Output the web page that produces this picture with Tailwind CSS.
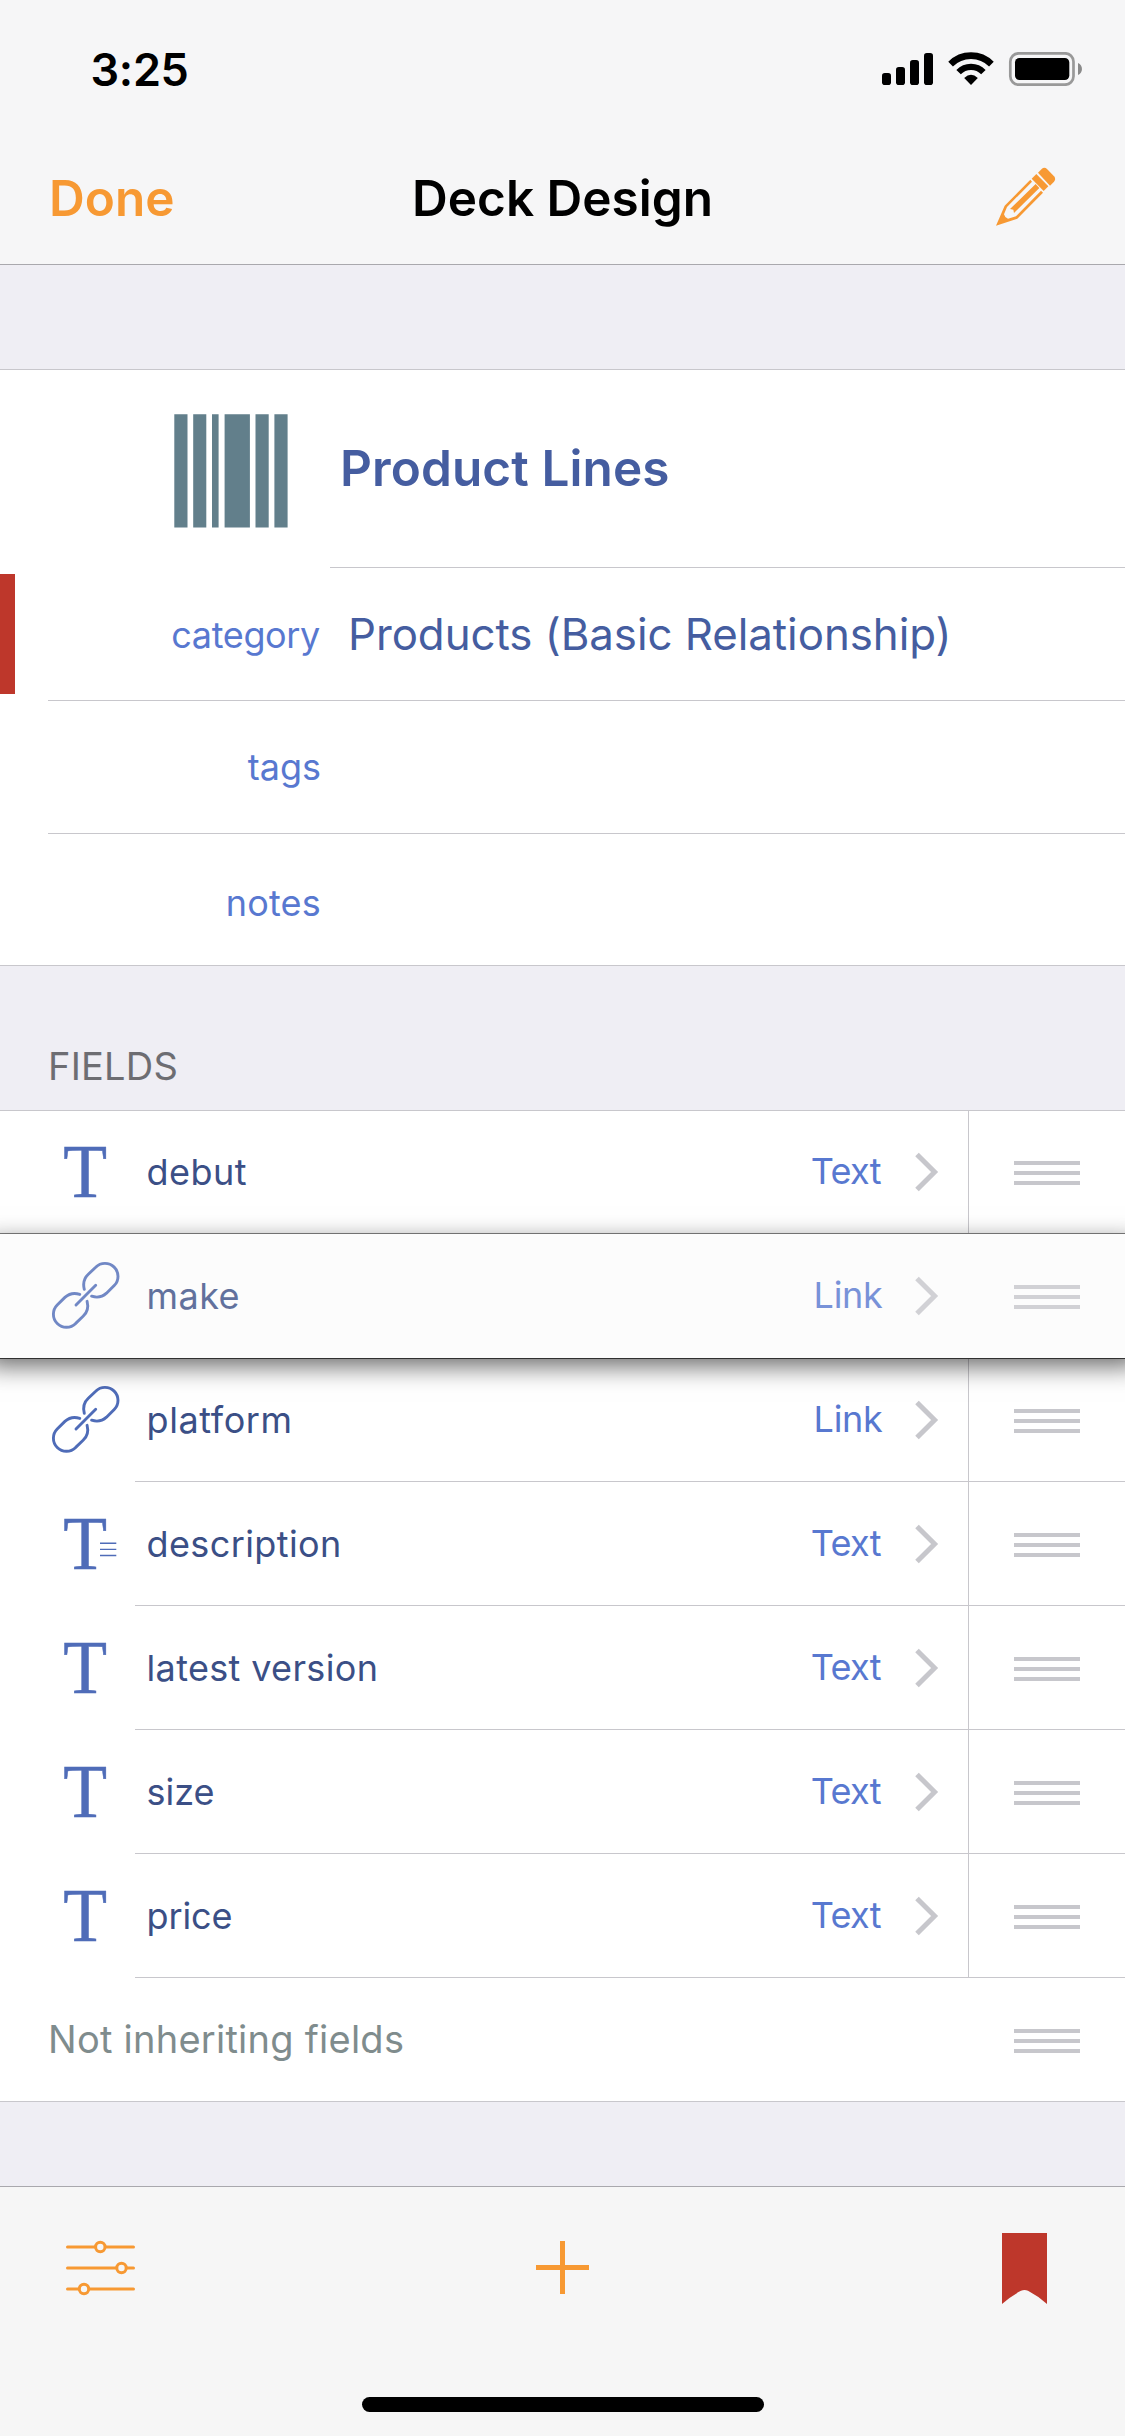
<!DOCTYPE html>
<html lang="en">
<head>
<meta charset="utf-8">
<title>Deck Design</title>
<script src="https://cdn.jsdelivr.net/npm/@tailwindcss/browser@4"></script>
</head>
<body class="w-[1125px] h-[2436px] overflow-hidden bg-[#efeef4] font-['Inter',sans-serif] text-[36px] leading-none">

<!-- shared icon shapes -->
<svg class="hidden">
  <symbol id="link" viewBox="48 0 72 124">
    <g fill="none" stroke="#4f6cb8" stroke-width="2.9" stroke-linecap="round">
      <path d="M84.3 55.3C82.8 49.5 84.3 44 88.3 40.3L95.7 33.2A13 13 0 0 1 114.2 51.6L106.5 59.2C102.5 62.8 97 64 91.6 62.2"/>
      <path d="M84.3 55.3C82.8 49.5 84.3 44 88.3 40.3L95.7 33.2A13 13 0 0 1 114.2 51.6L106.5 59.2C102.5 62.8 97 64 91.6 62.2" transform="rotate(180 85.7 61.3)"/>
      <path d="M76 71L95.7 51.3"/>
    </g>
  </symbol>
  <symbol id="chevron" viewBox="0 0 24 40"><path d="M2 2.5L19.600 20L2 37.500" fill="none" stroke="#c7c7cc" stroke-width="5"/></symbol>
  <symbol id="grip" viewBox="0 0 66 24"><path d="M0 2H66M0 12H66M0 22H66" fill="none" stroke="#c7c7cc" stroke-width="4"/></symbol>
</svg>

<header class="h-[265px] bg-[#f6f6f7] border-b border-[#a9a8ad]">
  <div class="h-[138px] flex items-center justify-between pl-[90.5px] pr-[43px]">
    <span class="text-[45px] font-semibold tracking-[-0.3px] text-black">3:25</span>
    <svg class="w-[200px] h-[34px]" viewBox="882 52 200 34">
      <rect x="882" y="73" width="9" height="12" rx="2.800"/>
      <rect x="896" y="67" width="9" height="18" rx="2.800"/>
      <rect x="910" y="60" width="9" height="25" rx="2.800"/>
      <rect x="924" y="53" width="9" height="32" rx="2.800"/>
      <path d="M950.6 64.1A28.8 28.8 0 0 1 991.4 64.1" fill="none" stroke="#000" stroke-width="6.600"/>
      <path d="M958.6 72.1A17.500 17.500 0 0 1 983.4 72.1" fill="none" stroke="#000" stroke-width="6.300"/>
      <path d="M971 85L964.2 78Q971 71.600 977.8 78Z"/>
      <rect x="1010.300" y="53.300" width="63.200" height="31.400" rx="8.500" fill="none" stroke="#999" stroke-width="2.700"/>
      <rect x="1015" y="58" width="54.300" height="22" rx="4.500"/>
      <path d="M1078 63C1083.300 65 1083.300 73 1078 75Z" fill="#8a8a8a"/>
    </svg>
  </div>
  <nav class="h-[120px] flex items-center justify-between pl-[49px] pr-[69px] text-[49.5px]">
    <span class="w-[140px] pt-[2px] font-semibold text-[#f79933]">Done</span>
    <span class="pt-[2px] ml-[-17px] mr-[43px] whitespace-nowrap font-semibold text-black">Deck Design</span>
    <svg class="w-[60px] h-[60px] overflow-visible" viewBox="408 414 180 180" fill="#f79933">
      <path d="M534 428L545 417Q553 410 561 417L582 439Q589 447 582 455L570 467Z"/>
      <path d="M515 446L529 432L565 469L551 483Z"/>
      <path d="M511 449L516 455L441 531L432 553L436 561L444 566L468 559L543 482L549 488L472 566L408 587L434 527Z"/>
      <path d="M527 462L538 474L462 549L460 539L450 537Z"/>
    </svg>
  </nav>
</header>

<section class="mt-[104px] h-[597px] bg-white border-y border-[#c8c7cc]">
  <div class="h-[198px] flex">
    <div class="w-[330px] flex items-center justify-end pr-[42px] pt-[4px]">
      <svg class="w-[114px] h-[114px]" viewBox="174 414 114 114" fill="#627f8b">
        <path d="M174.300 414.300h13.200v113.300h-13.200zM193.200 414.300h13.100v113.300h-13.100zM212 414.300h6.600v113.300h-6.600zM224.600 414.300h25.300v113.300h-25.300zM255.500 414.300h13.200v113.300h-13.200zM274.400 414.300h13.200v113.300h-13.200z"/>
      </svg>
    </div>
    <h1 class="flex-1 flex items-center border-b border-[#c8c7cc] pl-[10px] text-[49.5px] font-semibold tracking-[0.1px] text-[#455da0]">Product Lines</h1>
  </div>
  <div class="h-[133px] flex">
    <div class="w-[15px] h-[120px] mt-[6px] bg-[#be372b]"></div>
    <div class="ml-[33px] flex-1 flex items-center border-b border-[#c8c7cc]">
      <span class="w-[272px] text-right tracking-[-0.35px] text-[#5878d0] pt-px">category</span>
      <span class="pl-[28px] pt-[2px] text-[43.8px] tracking-[-0.04px] text-[#455da0]">Products (Basic Relationship)</span>
    </div>
  </div>
  <div class="h-[133px] ml-[48px] flex items-center border-b border-[#c8c7cc]">
    <span class="w-[273px] text-right text-[#5878d0]">tags</span>
  </div>
  <div class="h-[131px] ml-[48px] flex items-center pt-[7px]">
    <span class="w-[273px] text-right tracking-[0.2px] text-[#5878d0]">notes</span>
  </div>
</section>

<h2 class="h-[144px] flex items-end pb-[24px] pl-[48px] text-[38px] leading-[40px] tracking-[0.2px] text-[#6d6d72]">FIELDS</h2>

<section class="h-[992px] bg-white shadow-[inset_0_1px_0_#c8c7cc,inset_0_-1px_0_#c8c7cc]">
  <div id="fields"></div>
  <div class="h-[124px] flex items-center pl-[48px] pr-[45px]">
    <span class="flex-1 pb-[2px] text-[38px] tracking-[0.25px] text-[#7f8c8d]">Not inheriting fields</span>
    <svg class="w-[66px] h-[24px] mt-[2px]"><use href="#grip"/></svg>
  </div>
</section>

<footer class="mt-[84px] h-[250px] bg-[#f6f6f6] border-t border-[#a9a8ad]">
  <div class="h-[161px] grid grid-cols-3 items-center">
    <svg class="ml-[66px] w-[69px] h-[56px]" viewBox="0 0 69 56" fill="none" stroke="#f79933" stroke-width="3" stroke-linecap="round">
      <path d="M1.500 7H29M39.600 7H67.500M1.500 28H50M61 28H67.500M1.500 49H12.500M23.500 49H67.500"/>
      <circle cx="34.300" cy="7" r="4.700"/><circle cx="55.500" cy="28" r="4.700"/><circle cx="18" cy="49" r="4.700"/>
    </svg>
    <svg class="justify-self-center w-[53px] h-[53px]" viewBox="0 0 53 53"><path d="M26.500 0V53M0 26.500H53" stroke="#f79933" stroke-width="5"/></svg>
    <svg class="justify-self-end mr-[78px] w-[45px] h-[71px] mt-[2px]" viewBox="0 0 45 71"><path d="M0 0H45V71Q36 63 26 57.800Q22.500 56.200 19 57.800Q9 63 0 71Z" fill="#be372b"/></svg>
  </div>
  <div class="mx-auto mt-[49px] w-[402px] h-[15px] rounded-full bg-black"></div>
</footer>

<script>
const T = extra => `<svg class="w-[72px] h-[124px]" viewBox="48 0 72 124"><text x="63.2" y="87" font-family="Liberation Serif" font-size="76.5" textLength="43.8" lengthAdjust="spacingAndGlyphs" fill="#4f6cb8" stroke="#4f6cb8" stroke-width="0.5">T</text>${extra}</svg>`;
const icons = {
  text: T(''),
  long: T('<path d="M100 61.200H116.300M100 67.400H116.300M100 73.500H116.300" stroke="#4f6cb8" stroke-width="1.4"/>'),
  link: '<svg class="w-[72px] h-[124px]"><use href="#link"/></svg>',
};
const rows = [
  ['text', 'debut', 'Text', 0.5],
  ['link', 'make', 'Link', 0.45, true],
  ['link', 'platform', 'Link', 0.6],
  ['long', 'description', 'Text', 0.4],
  ['text', 'latest version', 'Text', 0.35],
  ['text', 'size', 'Text', 0],
  ['text', 'price', 'Text', -0.1],
];
document.getElementById('fields').innerHTML = rows.map(([icon, name, type, track, lifted]) => `
  <div class="h-[124px] flex pl-[48px] ${lifted ? 'relative z-10 bg-[#fcfcfc] shadow-[0_1px_0_#555,0_-1px_0_#858585]' : ''}">
    ${lifted ? '<div class="absolute -z-10 inset-y-0 -inset-x-[14px] shadow-[0_8px_24px_rgba(0,0,0,0.6)]"></div>' : ''}
    <div class="flex ${lifted ? 'opacity-80' : ''}">${icons[icon]}</div>
    <div class="ml-[15px] flex-1 flex border-b ${lifted ? 'border-transparent' : 'border-[#c8c7cc]'}">
      <div class="flex-1 flex items-center pl-[11.5px] pt-px ${lifted ? 'opacity-80' : ''}">
        <span class="flex-1 text-[#3b4f86]" style="letter-spacing:${track}px">${name}</span>
        <span class="pb-[2px] text-[#5878d0] ${type === 'Text' ? 'tracking-[-0.6px]' : 'tracking-[-0.3px]'}">${type}</span>
        <svg class="${type === 'Text' ? 'ml-[33.5px]' : 'ml-[32px]'} mr-[29.5px] w-[24px] h-[40px] mb-px"><use href="#chevron"/></svg>
      </div>
      <div class="w-[157px] flex items-center pl-[45px] pt-[3px] border-l ${lifted ? 'border-transparent' : 'border-[#c8c7cc]'}">
        <svg class="w-[66px] h-[24px] ${lifted ? 'opacity-80' : ''}"><use href="#grip"/></svg>
      </div>
    </div>
  </div>`).join('');
</script>
</body>
</html>
